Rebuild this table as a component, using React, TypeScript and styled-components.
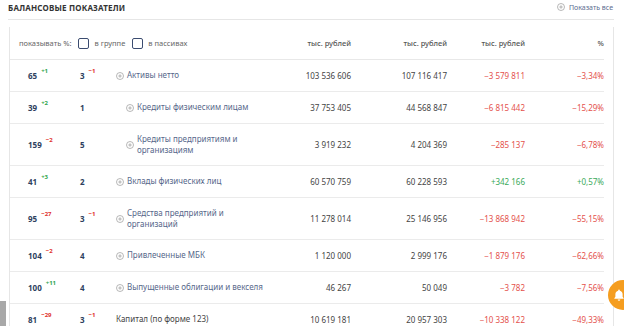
import React from "react";
import styled, { createGlobalStyle } from "styled-components";

interface Row {
  rank: number;
  rankDelta?: number;
  group: number;
  groupDelta?: number;
  name: string;
  level: number;
  expandable: boolean;
  current: string;
  previous: string;
  diff: string;
  percent: string;
}

const rows: Row[] = [
  { rank: 65, rankDelta: 1, group: 3, groupDelta: -1, name: "Активы нетто", level: 0, expandable: true, current: "103 536 606", previous: "107 116 417", diff: "−3 579 811", percent: "−3,34%" },
  { rank: 39, rankDelta: 2, group: 1, name: "Кредиты физическим лицам", level: 1, expandable: true, current: "37 753 405", previous: "44 568 847", diff: "−6 815 442", percent: "−15,29%" },
  { rank: 159, rankDelta: -2, group: 5, name: "Кредиты предприятиям и\nорганизациям", level: 1, expandable: true, current: "3 919 232", previous: "4 204 369", diff: "−285 137", percent: "−6,78%" },
  { rank: 41, rankDelta: 3, group: 2, name: "Вклады физических лиц", level: 0, expandable: true, current: "60 570 759", previous: "60 228 593", diff: "+342 166", percent: "+0,57%" },
  { rank: 95, rankDelta: -27, group: 3, groupDelta: -1, name: "Средства предприятий и\nорганизаций", level: 0, expandable: true, current: "11 278 014", previous: "25 146 956", diff: "−13 868 942", percent: "−55,15%" },
  { rank: 104, rankDelta: -2, group: 4, name: "Привлеченные МБК", level: 0, expandable: true, current: "1 120 000", previous: "2 999 176", diff: "−1 879 176", percent: "−62,66%" },
  { rank: 100, rankDelta: 11, group: 4, name: "Выпущенные облигации и векселя", level: 0, expandable: true, current: "46 267", previous: "50 049", diff: "−3 782", percent: "−7,56%" },
  { rank: 81, rankDelta: -29, group: 3, groupDelta: -1, name: "Капитал (по форме 123)", level: 0, expandable: false, current: "10 619 181", previous: "20 957 303", diff: "−10 338 122", percent: "−49,33%" },
];

const PlusCircle = () => (
  <svg width="8" height="8" viewBox="0 0 16 16" fill="none" stroke="#9a9a9a" strokeWidth="1.4">
    <circle cx="8" cy="8" r="7" />
    <path d="M8 4.5v7M4.5 8h7" />
  </svg>
);

const Bell = () => (
  <svg width="14" height="14" viewBox="0 0 24 24" fill="#fff">
    <path d="M12 2.5c-.8 0-1.4.6-1.4 1.4v.6C7.7 5.2 5.8 7.7 5.8 10.6v4.6L4 17.4v1h16v-1l-1.8-2.2v-4.6c0-2.9-1.9-5.4-4.8-6.1v-.6c0-.8-.6-1.4-1.4-1.4z" />
    <path d="M9.8 19.5a2.2 2.2 0 0 0 4.4 0z" />
  </svg>
);

const Delta = ({ value }: { value?: number }) =>
  value === undefined ? null : (
    <Sup $up={value > 0}>{value > 0 ? `+${value}` : `−${Math.abs(value)}`}</Sup>
  );

export default function App() {
  return (
    <>
      <GlobalStyle />
      <Page>
        <Header>
          <Title>Балансовые показатели</Title>
          <ShowAll>
            <PlusCircle />
            Показать все
          </ShowAll>
        </Header>
        <Table>
          <HeadRow>
            <Options>
              показывать %:
              <Check />
              в группе
              <Check />
              в пассивах
            </Options>
            <HeadCell>тыс. рублей</HeadCell>
            <HeadCell>тыс. рублей</HeadCell>
            <HeadCell>тыс. рублей</HeadCell>
            <HeadCell>%</HeadCell>
          </HeadRow>
          {rows.map((r) => {
            const tone = r.diff.startsWith("+") ? "up" : "down";
            return (
              <BodyRow key={r.name}>
                <Rank>
                  {r.rank}
                  <Delta value={r.rankDelta} />
                </Rank>
                <Rank>
                  {r.group}
                  <Delta value={r.groupDelta} />
                </Rank>
                <Name $level={r.level} $link={r.expandable}>
                  {r.expandable && <PlusCircle />}
                  <NameText>{r.name}</NameText>
                </Name>
                <Value>{r.current}</Value>
                <Value>{r.previous}</Value>
                <Value $tone={tone}>{r.diff}</Value>
                <Value $tone={tone}>{r.percent}</Value>
              </BodyRow>
            );
          })}
        </Table>
      </Page>
      <ScrollStub />
      <BellButton>
        <Bell />
      </BellButton>
    </>
  );
}

const GlobalStyle = createGlobalStyle`
  html, body {
    margin: 0;
    padding: 0;
    background: #fff;
    overflow: hidden;
  }
  body {
    font-family: "Noto Sans", "Open Sans", sans-serif;
    color: #444;
  }
`;

const Page = styled.div`
  width: 606px;
  padding-left: 8px;
`;

const Header = styled.div`
  display: flex;
  justify-content: space-between;
  align-items: center;
  height: 14px;
  padding-bottom: 5px;
  border-bottom: 1px solid #e6e6e6;
`;

const Title = styled.div`
  font-size: 8px;
  font-weight: 700;
  text-transform: uppercase;
  letter-spacing: 0.2px;
  color: #333;
`;

const ShowAll = styled.div`
  display: flex;
  align-items: center;
  gap: 4px;
  font-size: 7px;
  color: #5c6d8f;
  padding-right: 1px;
`;

const cols = "70px 36px 139px 96px 96px 78px 79px";

const Table = styled.div`
  margin: 7px 0 0 1px;
  border-left: 1px solid #e6e6e6;
  border-right: 1px solid #e6e6e6;
  padding-right: 9px;
`;

const HeadRow = styled.div`
  display: grid;
  grid-template-columns: ${cols};
  align-items: center;
  height: 32px;
  border-bottom: 1px solid #e8e8e8;
  font-size: 7.5px;
`;

const Options = styled.div`
  grid-column: 1 / span 3;
  display: flex;
  align-items: center;
  padding-left: 9px;
  color: #666;
`;

const Check = styled.span`
  width: 9px;
  height: 9px;
  border: 1.2px solid #3b4c70;
  border-radius: 2px;
  margin: 0 5px 0 7px;
`;

const HeadCell = styled.div`
  text-align: right;
  color: #555;
  font-weight: 500;
`;

const BodyRow = styled.div`
  display: grid;
  grid-template-columns: ${cols};
  align-items: center;
  min-height: 31px;
  border-bottom: 1px solid #ebebeb;
  font-size: 8px;
`;

const Rank = styled.div`
  display: flex;
  align-items: flex-start;
  gap: 4px;
  font-weight: 700;
  color: #2e3f60;
  &:first-child {
    padding-left: 18px;
  }
`;

const Sup = styled.span<{ $up: boolean }>`
  font-size: 6px;
  margin-top: -3px;
  color: ${(p) => (p.$up ? "#2fa54c" : "#e0302c")};
`;

const Name = styled.div<{ $level: number; $link: boolean }>`
  display: flex;
  align-items: center;
  gap: 3px;
  padding: 10px 0;
  padding-left: ${(p) => p.$level * 10}px;
  color: ${(p) => (p.$link ? "#56678a" : "#444")};
  line-height: 10.5px;

  svg {
    flex-shrink: 0;
  }
`;

const NameText = styled.span`
  white-space: pre;
`;

const Value = styled.div<{ $tone?: "up" | "down" }>`
  text-align: right;
  color: ${(p) => (p.$tone === "up" ? "#3aaa5a" : p.$tone === "down" ? "#e4514c" : "#444")};
`;

const ScrollStub = styled.div`
  position: fixed;
  left: 0;
  bottom: 0;
  width: 6px;
  height: 25px;
  background: #a8a8a8;
`;

const BellButton = styled.div`
  position: fixed;
  left: 608px;
  top: 280px;
  width: 30px;
  height: 30px;
  border-radius: 50%;
  background: #f59d1f;
  display: flex;
  align-items: center;
  padding-left: 4px;
  box-sizing: border-box;
`;
